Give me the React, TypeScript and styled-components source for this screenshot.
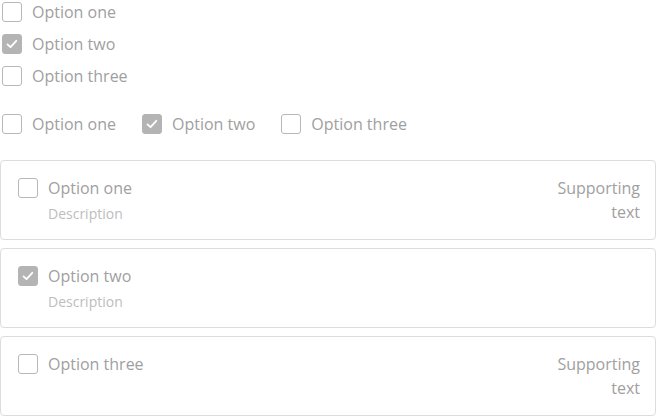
import React from "react";
import styled, { createGlobalStyle } from "styled-components";

const Global = createGlobalStyle`
  html, body { margin: 0; padding: 0; background: #fff; }
  body { font-family: "Open Sans", "Liberation Sans", sans-serif; color: #a0a0a0; }
  * { box-sizing: border-box; }
`;

const Page = styled.div`
  width: 656px;
  display: flex;
  flex-direction: column;
`;

const VGroup = styled.div`
  display: flex;
  flex-direction: column;
  gap: 8px;
`;

const HGroup = styled.div`
  display: flex;
  flex-direction: row;
  gap: 24px;
  margin-top: 24px;
`;

const Item = styled.label`
  display: flex;
  align-items: center;
  gap: 8px;
  font-size: 16px;
  line-height: 24px;
  height: 24px;
`;

const BoxWrap = styled.span`
  width: 24px;
  height: 24px;
  padding: 2px;
  display: flex;
  flex: none;
`;

const Box = styled.span<{ $checked?: boolean }>`
  width: 20px;
  height: 20px;
  border-radius: 3px;
  border: 1.5px solid ${(p) => (p.$checked ? "#b4b4b4" : "#b8b8b8")};
  background: ${(p) => (p.$checked ? "#b4b4b4" : "#fff")};
  display: flex;
  align-items: center;
  justify-content: center;
`;

const Check = () => (
  <svg width="14" height="14" viewBox="0 0 14 14" fill="none">
    <path d="M2.5 7.4 L5.5 10.2 L11.3 3.8" stroke="#fff" strokeWidth="1.8" strokeLinecap="round" strokeLinejoin="round" />
  </svg>
);

const CheckBox = ({ checked }: { checked?: boolean }) => (
  <BoxWrap>
    <Box $checked={checked}>{checked && <Check />}</Box>
  </BoxWrap>
);

const Cards = styled.div`
  display: flex;
  flex-direction: column;
  gap: 8px;
  margin-top: 24px;
`;

const Card = styled.div`
  border: 1px solid #dcdcdc;
  border-radius: 4px;
  padding: 15px;
  height: 80px;
  display: flex;
  align-items: flex-start;
  gap: 8px;
`;

const CardBody = styled.div`
  flex: 1;
  display: flex;
  flex-direction: column;
`;

const Title = styled.div`
  font-size: 16px;
  line-height: 24px;
`;

const Desc = styled.div`
  font-size: 14px;
  line-height: 20px;
  margin-top: 4px;
  color: #bdbdbd;
`;

const Support = styled.div`
  width: 90px;
  text-align: right;
  font-size: 16px;
  line-height: 24px;
`;

export default function App() {
  return (
    <Page>
      <Global />
      <VGroup>
        <Item><CheckBox />Option one</Item>
        <Item><CheckBox checked />Option two</Item>
        <Item><CheckBox />Option three</Item>
      </VGroup>
      <HGroup>
        <Item><CheckBox />Option one</Item>
        <Item><CheckBox checked />Option two</Item>
        <Item><CheckBox />Option three</Item>
      </HGroup>
      <Cards>
        <Card>
          <CheckBox />
          <CardBody>
            <Title>Option one</Title>
            <Desc>Description</Desc>
          </CardBody>
          <Support>Supporting text</Support>
        </Card>
        <Card>
          <CheckBox checked />
          <CardBody>
            <Title>Option two</Title>
            <Desc>Description</Desc>
          </CardBody>
        </Card>
        <Card>
          <CheckBox />
          <CardBody>
            <Title>Option three</Title>
          </CardBody>
          <Support>Supporting text</Support>
        </Card>
      </Cards>
    </Page>
  );
}
